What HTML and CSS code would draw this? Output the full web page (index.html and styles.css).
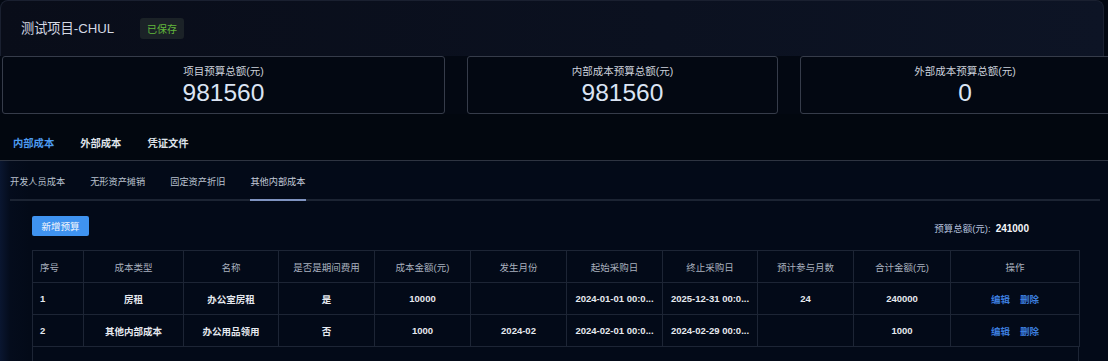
FILE: index.html
```html
<!DOCTYPE html>
<html lang="zh-CN">
<head>
<meta charset="utf-8">
<title>测试项目-CHUL</title>
<link rel="stylesheet" href="styles.css">
</head>
<body>
<div class="page">
  <div class="top">
    <header class="header">
      <h1 class="title">测试项目-CHUL</h1>
      <span class="badge">已保存</span>
    </header>
    <section class="stats">
      <div class="stat">
        <div class="stat-label">项目预算总额(元)</div>
        <div class="stat-value">981560</div>
      </div>
      <div class="stat">
        <div class="stat-label">内部成本预算总额(元)</div>
        <div class="stat-value">981560</div>
      </div>
      <div class="stat stat-wide">
        <div class="stat-label">外部成本预算总额(元)</div>
        <div class="stat-value">0</div>
      </div>
    </section>
  </div>

  <nav class="tabs">
    <span class="tab active">内部成本</span>
    <span class="tab">外部成本</span>
    <span class="tab">凭证文件</span>
  </nav>

  <div class="content">
    <nav class="subtabs">
      <span class="subtab">开发人员成本</span>
      <span class="subtab">无形资产摊销</span>
      <span class="subtab">固定资产折旧</span>
      <span class="subtab active">其他内部成本</span>
    </nav>

    <div class="panel">
      <div class="toolbar">
        <button class="btn-primary">新增预算</button>
        <div class="total"><span class="total-label">预算总额(元):</span><span class="total-value">241000</span></div>
      </div>

      <table class="grid">
        <colgroup>
          <col class="c1"><col class="c2"><col class="c3"><col class="c4"><col class="c5">
          <col class="c6"><col class="c7"><col class="c8"><col class="c9"><col class="c10"><col class="c11">
        </colgroup>
        <thead>
          <tr>
            <th class="left">序号</th><th>成本类型</th><th>名称</th><th>是否是期间费用</th><th>成本金额(元)</th>
            <th>发生月份</th><th>起始采购日</th><th>终止采购日</th><th>预计参与月数</th><th>合计金额(元)</th><th>操作</th>
          </tr>
        </thead>
        <tbody>
          <tr>
            <td class="left">1</td><td>房租</td><td>办公室房租</td><td>是</td><td>10000</td>
            <td></td><td>2024-01-01 00:0...</td><td>2025-12-31 00:0...</td><td>24</td><td>240000</td>
            <td><span class="link">编辑</span><span class="link">删除</span></td>
          </tr>
          <tr>
            <td class="left">2</td><td>其他内部成本</td><td>办公用品领用</td><td>否</td><td>1000</td>
            <td>2024-02</td><td>2024-02-01 00:0...</td><td>2024-02-29 00:0...</td><td></td><td>1000</td>
            <td><span class="link">编辑</span><span class="link">删除</span></td>
          </tr>
        </tbody>
      </table>
      <div class="grid-foot"></div>
    </div>
  </div>
</div>
</body>
</html>
```

FILE: styles.css
```css
* { box-sizing: border-box; }

html, body {
  margin: 0;
  padding: 0;
  height: 100%;
  overflow: hidden;
}

body {
  background: #030a18;
  font-family: "Liberation Sans", "Noto Sans CJK SC", sans-serif;
  color: #d8dde8;
}

.page {
  width: 1108px;
  height: 361px;
  overflow: hidden;
  background: linear-gradient(90deg, #0a1630 0px, #040c1c 10px, #030a18 30px);
}

.top {
  background: #030812;
}

.header {
  height: 56px;
  display: flex;
  align-items: center;
  padding-left: 20px;
  gap: 26px;
  background: linear-gradient(90deg, #090d19 0%, #0b1120 60%, #0d1425 100%);
  border: 1px solid #1a2030;
  border-bottom: none;
  border-radius: 8px 8px 0 0;
  width: 1104px;
}

.title {
  margin: 0;
  font-size: 13.2px;
  font-weight: normal;
  color: #d4d9e4;
  line-height: 20px;
}

.badge {
  width: 44px;
  height: 21px;
  display: flex;
  align-items: center;
  justify-content: center;
  background: #1b2227;
  border-radius: 3px;
  color: #62b83c;
  font-size: 10px;
}

.stats {
  display: grid;
  grid-template-columns: 443px 311px 330px;
  gap: 22px;
  padding-left: 2px;
  background: #030812;
}

.stat {
  height: 58px;
  border: 1px solid #363c4a;
  border-radius: 3px;
  display: flex;
  flex-direction: column;
  align-items: center;
  padding-top: 6px;
}

.stat-label {
  font-size: 10.5px;
  line-height: 16px;
  color: #cdd2dc;
}

.stat-value {
  font-size: 24.5px;
  line-height: 28px;
  color: #dbe4f4;
}

.tabs {
  height: 47px;
  display: flex;
  align-items: center;
  gap: 26px;
  padding: 14px 0 0 13px;
  border-bottom: 1px solid #2e3441;
  background: #02070f;
}

.tab {
  font-size: 10.3px;
  font-weight: bold;
  color: #dfe3ea;
  line-height: 14px;
}

.tab.active {
  color: #4d9bf0;
}

.content {
  padding: 0 8px 0 10px;
}

.subtabs {
  height: 40px;
  display: flex;
  align-items: flex-end;
  gap: 25px;
  border-bottom: 2px solid #1c2433;
}

.subtab {
  font-size: 9.2px;
  color: #b9c1cf;
  line-height: 14px;
  padding-bottom: 10px;
  border-bottom: 2px solid transparent;
  margin-bottom: -2px;
}

.subtab.active {
  color: #c3cad8;
  border-bottom-color: #7f93c0;
}

.panel {
  padding: 15px 21px 0 22px;
}

.toolbar {
  display: flex;
  justify-content: space-between;
  align-items: flex-start;
  height: 34px;
}

.btn-primary {
  width: 57px;
  height: 20px;
  padding: 0;
  border: none;
  border-radius: 2px;
  background: #3f93f0;
  color: #f2f6fc;
  font-family: inherit;
  font-size: 9.5px;
}

.total {
  display: flex;
  align-items: center;
  gap: 5px;
  margin-top: 5px;
  margin-right: 50px;
}

.total-label {
  font-size: 9.5px;
  color: #b4c0dc;
}

.total-value {
  font-size: 10px;
  font-weight: bold;
  color: #f4f6fa;
}

.grid {
  width: 1047px;
  border-collapse: collapse;
  table-layout: fixed;
}

.c1 { width: 51px; }
.c2 { width: 100px; }
.c3 { width: 95px; }
.c4 { width: 96px; }
.c5 { width: 96px; }
.c6 { width: 96px; }
.c7 { width: 96px; }
.c8 { width: 95px; }
.c9 { width: 96px; }
.c10 { width: 97px; }
.c11 { width: 129px; }

.grid th, .grid td {
  border: 1px solid #1d2535;
  height: 32px;
  padding: 0 4px;
  text-align: center;
  white-space: nowrap;
  overflow: hidden;
  font-size: 9.5px;
}

.grid th {
  font-weight: normal;
  color: #a9b1bf;
}

.grid td {
  font-weight: bold;
  color: #e6e9ef;
}

.grid .left {
  text-align: left;
  padding-left: 7px;
}

.link {
  color: #3c7ddf;
  font-weight: bold;
  margin: 0 5px;
}

.grid-foot {
  width: 1047px;
  height: 20px;
  border-left: 1px solid #1d2535;
  border-right: 1px solid #1d2535;
}
```
